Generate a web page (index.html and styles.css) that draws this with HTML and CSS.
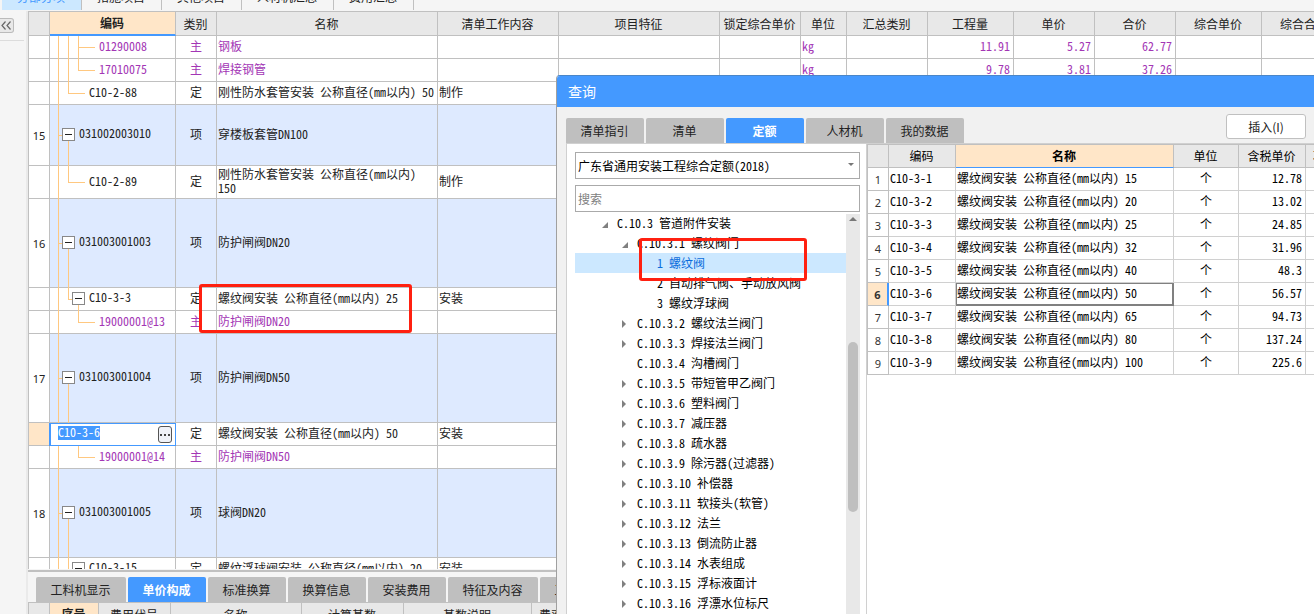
FILE: index.html
```html
<!DOCTYPE html>
<html lang="zh-CN">
<head>
<meta charset="utf-8">
<title>分部分项</title>
<link rel="stylesheet" href="styles.css">
</head>
<body>
<div class="app">
  <nav class="top-tabs">
    <button class="top-tab top-tab-active">分部分项</button>
    <button class="top-tab">措施项目</button>
    <button class="top-tab">其他项目</button>
    <button class="top-tab">人材机汇总</button>
    <button class="top-tab">费用汇总</button>
  </nav>
  <div class="workspace">
    <aside class="sidebar">
      <button class="collapse" aria-label="收起">
        <svg width="11" height="9" viewBox="0 0 11 9"><path d="M4.500 0.500L1 4.500L4.500 8.500M9.500 0.500L6 4.500L9.500 8.500" fill="none" stroke="#666" stroke-width="1.200"/></svg>
      </button>
    </aside>
    <main class="content">
      <div class="grid-area">
        <table class="grid main-grid">
          <colgroup>
            <col class="w-no"><col class="w-code"><col class="w-type"><col class="w-name"><col class="w-work"><col class="w-feature"><col class="w-80"><col class="w-unit"><col class="w-80"><col class="w-85"><col class="w-80"><col class="w-80"><col class="w-85"><col class="w-85">
          </colgroup>
          <thead>
            <tr><th></th><th class="current">编码</th><th>类别</th><th>名称</th><th>清单工作内容</th><th>项目特征</th><th>锁定综合单价</th><th>单位</th><th>汇总类别</th><th>工程量</th><th>单价</th><th>合价</th><th>综合单价</th><th>综合合价</th></tr>
          </thead>
          <tbody>
            <tr class="material"><td class="no"></td><td class="code t-mid3">01290008</td><td class="type">主</td><td>钢板</td><td></td><td></td><td></td><td>kg</td><td></td><td class="num">11.91</td><td class="num">5.27</td><td class="num">62.77</td><td></td><td></td></tr>
            <tr class="material"><td class="no"></td><td class="code t-end3">17010075</td><td class="type">主</td><td>焊接钢管</td><td></td><td></td><td></td><td>kg</td><td></td><td class="num">9.78</td><td class="num">3.81</td><td class="num">37.26</td><td></td><td></td></tr>
            <tr><td class="no"></td><td class="code t-end2">C10-2-88</td><td class="type">定</td><td>刚性防水套管安装 公称直径(mm以内) 50</td><td>制作</td><td></td><td></td><td></td><td></td><td></td><td></td><td></td><td></td><td></td></tr>
            <tr class="item h-60"><td class="no">15</td><td class="code t-item"><button class="fold" aria-label="折叠"></button>031002003010</td><td class="type">项</td><td>穿楼板套管DN100</td><td></td><td></td><td></td><td></td><td></td><td></td><td></td><td></td><td></td><td></td></tr>
            <tr class="h-33"><td class="no"></td><td class="code t-end2">C10-2-89</td><td class="type">定</td><td>刚性防水套管安装 公称直径(mm以内) 150</td><td>制作</td><td></td><td></td><td></td><td></td><td></td><td></td><td></td><td></td><td></td></tr>
            <tr class="item h-89"><td class="no">16</td><td class="code t-item"><button class="fold" aria-label="折叠"></button>031003001003</td><td class="type">项</td><td>防护闸阀DN20</td><td></td><td></td><td></td><td></td><td></td><td></td><td></td><td></td><td></td><td></td></tr>
            <tr><td class="no"></td><td class="code t-sub"><button class="fold" aria-label="折叠"></button>C10-3-3</td><td class="type">定</td><td>螺纹阀安装 公称直径(mm以内) 25</td><td>安装</td><td></td><td></td><td></td><td></td><td></td><td></td><td></td><td></td><td></td></tr>
            <tr class="material"><td class="no"></td><td class="code t-last3">19000001@13</td><td class="type">主</td><td>防护闸阀DN20</td><td></td><td></td><td></td><td></td><td></td><td></td><td></td><td></td><td></td><td></td></tr>
            <tr class="item h-89"><td class="no">17</td><td class="code t-item"><button class="fold" aria-label="折叠"></button>031003001004</td><td class="type">项</td><td>防护闸阀DN50</td><td></td><td></td><td></td><td></td><td></td><td></td><td></td><td></td><td></td><td></td></tr>
            <tr><td class="no no-current"></td><td class="editing"><div class="editor"><input class="code-input" value="C10-3-6" aria-label="编码"><button class="more" aria-label="更多"><i></i><i></i><i></i></button></div></td><td class="type">定</td><td>螺纹阀安装 公称直径(mm以内) 50</td><td>安装</td><td></td><td></td><td></td><td></td><td></td><td></td><td></td><td></td><td></td></tr>
            <tr class="material"><td class="no"></td><td class="code t-last3">19000001@14</td><td class="type">主</td><td>防护闸阀DN50</td><td></td><td></td><td></td><td></td><td></td><td></td><td></td><td></td><td></td><td></td></tr>
            <tr class="item h-89"><td class="no">18</td><td class="code t-item"><button class="fold" aria-label="折叠"></button>031003001005</td><td class="type">项</td><td>球阀DN20</td><td></td><td></td><td></td><td></td><td></td><td></td><td></td><td></td><td></td><td></td></tr>
            <tr><td class="no"></td><td class="code t-sub"><button class="fold" aria-label="折叠"></button>C10-3-15</td><td class="type">定</td><td>螺纹浮球阀安装 公称直径(mm以内) 20</td><td>安装</td><td></td><td></td><td></td><td></td><td></td><td></td><td></td><td></td><td></td></tr>
          </tbody>
        </table>
      </div>
      <section class="detail">
        <div class="tabs detail-tabs">
          <button class="tab tab-wide">工料机显示</button>
          <button class="tab tab-active">单价构成</button>
          <button class="tab">标准换算</button>
          <button class="tab">换算信息</button>
          <button class="tab">安装费用</button>
          <button class="tab tab-wide">特征及内容</button>
          <button class="tab tab-wide">工程量明细</button>
        </div>
        <table class="grid detail-grid">
          <colgroup><col class="w-no"><col class="w-seq"><col class="w-fee"><col class="w-dname"><col class="w-base"><col class="w-desc"><col class="w-rate"></colgroup>
          <thead><tr><th></th><th class="current">序号</th><th>费用代号</th><th>名称</th><th>计算基数</th><th>基数说明</th><th class="cut">费率</th></tr></thead>
        </table>
      </section>
    </main>
  </div>

  <div class="mark mark-grid"></div>

  <section class="dialog" role="dialog" aria-label="查询">
    <h1 class="dialog-title">查询</h1>
    <div class="dialog-bar">
      <div class="tabs">
        <button class="tab">清单指引</button>
        <button class="tab">清单</button>
        <button class="tab tab-active">定额</button>
        <button class="tab">人材机</button>
        <button class="tab">我的数据</button>
      </div>
      <button class="insert">插入(I)</button>
    </div>
    <div class="dialog-body">
      <div class="library">
        <div class="select-box">
          <select class="field" aria-label="定额库"><option>广东省通用安装工程综合定额(2018)</option></select>
        </div>
        <input class="field" type="search" placeholder="搜索" aria-label="搜索">
        <div class="tree-box">
          <ul class="tree">
            <li class="l1 open">C.10.3 管道附件安装</li>
            <li class="l2 open">C.10.3.1 螺纹阀门</li>
            <li class="l3 selected">1 螺纹阀</li>
            <li class="l3">2 自动排气阀、手动放风阀</li>
            <li class="l3">3 螺纹浮球阀</li>
            <li class="l2 closed">C.10.3.2 螺纹法兰阀门</li>
            <li class="l2 closed">C.10.3.3 焊接法兰阀门</li>
            <li class="l2">C.10.3.4 沟槽阀门</li>
            <li class="l2 closed">C.10.3.5 带短管甲乙阀门</li>
            <li class="l2 closed">C.10.3.6 塑料阀门</li>
            <li class="l2 closed">C.10.3.7 减压器</li>
            <li class="l2 closed">C.10.3.8 疏水器</li>
            <li class="l2 closed">C.10.3.9 除污器(过滤器)</li>
            <li class="l2 closed">C.10.3.10 补偿器</li>
            <li class="l2 closed">C.10.3.11 软接头(软管)</li>
            <li class="l2 closed">C.10.3.12 法兰</li>
            <li class="l2 closed">C.10.3.13 倒流防止器</li>
            <li class="l2 closed">C.10.3.14 水表组成</li>
            <li class="l2 closed">C.10.3.15 浮标液面计</li>
            <li class="l2 closed">C.10.3.16 浮漂水位标尺</li>
          </ul>
          <div class="scrollbar"><span class="scroll-up"></span><span class="thumb"></span></div>
          <div class="mark mark-tree"></div>
        </div>
      </div>
      <div class="results">
        <table class="grid result-grid">
          <colgroup><col class="w-no"><col class="w-rcode"><col class="w-rname"><col class="w-runit"><col class="w-rprice"><col class="w-85"></colgroup>
          <thead><tr><th></th><th>编码</th><th class="current">名称</th><th>单位</th><th>含税单价</th><th class="cut">项目特征</th></tr></thead>
          <tbody>
            <tr><td class="no">1</td><td>C10-3-1</td><td>螺纹阀安装 公称直径(mm以内) 15</td><td class="type">个</td><td class="num">12.78</td><td></td></tr>
            <tr><td class="no">2</td><td>C10-3-2</td><td>螺纹阀安装 公称直径(mm以内) 20</td><td class="type">个</td><td class="num">13.02</td><td></td></tr>
            <tr><td class="no">3</td><td>C10-3-3</td><td>螺纹阀安装 公称直径(mm以内) 25</td><td class="type">个</td><td class="num">24.85</td><td></td></tr>
            <tr><td class="no">4</td><td>C10-3-4</td><td>螺纹阀安装 公称直径(mm以内) 32</td><td class="type">个</td><td class="num">31.96</td><td></td></tr>
            <tr><td class="no">5</td><td>C10-3-5</td><td>螺纹阀安装 公称直径(mm以内) 40</td><td class="type">个</td><td class="num">48.3</td><td></td></tr>
            <tr><td class="no no-current">6</td><td>C10-3-6</td><td class="focused">螺纹阀安装 公称直径(mm以内) 50</td><td class="type">个</td><td class="num">56.57</td><td></td></tr>
            <tr><td class="no">7</td><td>C10-3-7</td><td>螺纹阀安装 公称直径(mm以内) 65</td><td class="type">个</td><td class="num">94.73</td><td></td></tr>
            <tr><td class="no">8</td><td>C10-3-8</td><td>螺纹阀安装 公称直径(mm以内) 80</td><td class="type">个</td><td class="num">137.24</td><td></td></tr>
            <tr><td class="no">9</td><td>C10-3-9</td><td>螺纹阀安装 公称直径(mm以内) 100</td><td class="type">个</td><td class="num">225.6</td><td></td></tr>
          </tbody>
        </table>
      </div>
    </div>
  </section>
</div>
</body>
</html>
```
FILE: styles.css
```css
:root {
  --line: #c0c0c0;
  --blue: #4499ff;
  --peach: #ffe6c8;
  --orange: linear-gradient(#ffc880, #ffc880);
  --rule: linear-gradient(#c0c0c0, #c0c0c0) 0 100% / 100% 1px no-repeat;
  --mono: "Noto Sans Mono CJK SC", "Noto Sans CJK SC", monospace;
}

* { box-sizing: border-box; }

body, button, input, select {
  font-family: var(--mono);
  font-size: 12px;
  line-height: 14px;
  color: #222;
}

body { margin: 0; }
button { padding: 0; border: 0; white-space: nowrap; }

.app {
  position: relative;
  display: flex;
  flex-direction: column;
  height: 100vh;
  overflow: hidden;
  background: #f5f5f5;
}

/* top tabs */
.top-tabs {
  display: flex;
  align-items: flex-end;
  flex: none;
  height: 11px;
  padding: 0 0 1px 2px;
  overflow: hidden;
}
.top-tab {
  flex: none;
  height: 24px;
  padding: 0 16px 3px 15px;
  border-right: 1px solid var(--line);
  background: #f5f5f5;
}
.top-tab-active { background: #cce8ff; color: var(--blue); }

/* workspace */
.workspace { display: flex; flex: 1; min-height: 0; }
.sidebar {
  flex: none;
  width: 28px;
  border-right: 2px solid #eaeaea;
}
.sidebar::after {
  content: "";
  display: block;
  width: 24px;
  margin-top: 7px;
  border-top: 1px solid #dcdcdc;
}
.collapse {
  display: flex;
  align-items: center;
  justify-content: center;
  width: 14px;
  height: 15px;
  margin-top: 7px;
  border: 1px solid #bbb;
  border-left: 0;
  border-radius: 0 3px 3px 0;
  background: #e8e8e8;
}
.content {
  display: flex;
  flex-direction: column;
  flex: 1;
  min-width: 0;
}
.grid-area {
  flex: 1;
  min-height: 0;
  overflow: hidden;
  border-top: 1px solid var(--line);
  border-left: 1px solid var(--line);
  background: #fff;
}

/* grids */
.grid {
  table-layout: fixed;
  width: 100%;
  border-spacing: 0;
  background: #fff;
}
.main-grid { min-width: 1319px; }
.grid th {
  height: 24px;
  padding: 0 1px 0 0;
  border-right: 1px solid var(--line);
  border-bottom: 1px solid var(--line);
  background: #e8e8e8;
  font-weight: 400;
  white-space: nowrap;
  overflow: hidden;
}
.grid th.current {
  border-bottom: 2px solid var(--blue);
  background: var(--peach);
  font-weight: 700;
}
.grid th.cut { padding-left: 7px; text-align: left; }
.grid td {
  height: 23px;
  padding: 0 1px 2px;
  border-right: 1px solid var(--line);
  border-bottom: 1px solid var(--line);
}
.grid .no {
  padding: 1px 0 0;
  font-family: "Noto Sans", sans-serif;
  font-size: 11px;
  text-align: center;
}
.grid .no-current { background: var(--peach); font-weight: 700; }
.grid .type { text-align: center; }
.grid .num { padding-right: 3px; text-align: right; }
.grid .h-60 td { height: 61px; }
.grid .h-33 td { height: 33px; }
.grid .h-89 td { height: 89px; }
.item td { background: #deeaff; }
.item .no { background: #fff; }
.material { color: #a336b5; }

.w-no { width: 21px; }
.w-code { width: 126px; }
.w-type { width: 41px; }
.w-name { width: 221px; }
.w-work { width: 121px; }
.w-feature { width: 161px; }
.w-unit { width: 46px; }
.w-80 { width: 81px; }
.w-85 { width: 86px; }
.w-seq { width: 49px; }
.w-fee { width: 72px; }
.w-dname { width: 131px; }
.w-base { width: 102px; }
.w-desc { width: 128px; }
.w-rcode { width: 67px; }
.w-rname { width: 218px; }
.w-runit { width: 65px; }
.w-rprice { width: 67px; }

/* tree connectors inside the code column */
.grid td.code { padding-bottom: 4px; border-bottom: 0; }
.grid td.t-mid3 {
  padding-left: 49px;
  background:
    var(--orange) 8px 0 / 1px 100% no-repeat,
    var(--orange) 18px 0 / 1px 100% no-repeat,
    var(--orange) 28px 0 / 1px 100% no-repeat,
    var(--orange) 28px 50% / 17px 1px no-repeat,
    var(--rule);
}
.grid td.t-end3 {
  padding-left: 49px;
  background:
    var(--orange) 8px 0 / 1px 100% no-repeat,
    var(--orange) 18px 0 / 1px 100% no-repeat,
    var(--orange) 28px 0 / 1px 50% no-repeat,
    var(--orange) 28px 50% / 17px 1px no-repeat,
    var(--rule);
}
.grid td.t-last3 {
  padding-left: 49px;
  background:
    var(--orange) 8px 0 / 1px 100% no-repeat,
    var(--orange) 28px 0 / 1px 50% no-repeat,
    var(--orange) 28px 50% / 17px 1px no-repeat,
    var(--rule);
}
.grid td.t-end2 {
  padding-left: 39px;
  background:
    var(--orange) 8px 0 / 1px 100% no-repeat,
    var(--orange) 18px 0 / 1px 50% no-repeat,
    var(--orange) 18px 50% / 17px 1px no-repeat,
    var(--rule);
}
.grid td.t-item {
  padding-left: 12px;
  background:
    var(--orange) 8px 0 / 1px 100% no-repeat,
    var(--orange) 8px 50% / 4px 1px no-repeat,
    var(--orange) 18px 100% / 1px 50% no-repeat,
    var(--rule),
    #deeaff;
}
.grid td.t-sub {
  padding-left: 22px;
  background:
    var(--orange) 8px 0 / 1px 100% no-repeat,
    var(--orange) 18px 0 / 1px 50% no-repeat,
    var(--orange) 18px 50% / 4px 1px no-repeat,
    var(--orange) 28px 100% / 1px 50% no-repeat,
    var(--rule);
}
.fold {
  width: 13px;
  height: 13px;
  margin-right: 4px;
  border: 1px solid #888;
  background: linear-gradient(#222, #222) 50% 50% / 7px 1px no-repeat, #fff;
  vertical-align: middle;
}

/* code being edited */
.grid td.editing {
  padding: 0 3px 0 7px;
  border: 1px solid var(--blue);
  box-shadow: -1px 0 0 var(--blue);
}
.editor { display: flex; align-items: center; justify-content: space-between; }
.code-input {
  align-self: flex-start;
  width: 42px;
  height: 14px;
  padding: 0 0 2px;
  border: 0;
  background: var(--blue);
  color: #fff;
}
.more {
  display: flex;
  align-items: center;
  justify-content: center;
  gap: 2px;
  width: 14px;
  height: 17px;
  border: 1px solid #555;
  border-radius: 3px;
  background: #f0f2f8;
}
.more i { width: 2px; height: 2px; background: #444; }

/* tabs */
.tabs { display: flex; gap: 2px; }
.tab {
  flex: none;
  width: 78px;
  height: 25px;
  padding-right: 1px;
  border-radius: 2px 2px 0 0;
  background: #bfbfbf;
}
.tab-wide { width: 90px; }
.tab-active { background: var(--blue); color: #fff; font-weight: 700; }

.detail {
  flex: none;
  height: 45px;
  overflow: hidden;
  border-top: 1px solid #f5f5f5;
}
.detail-tabs {
  padding: 5px 0 0 8px;
  border-top: 2px solid var(--line);
}
.detail-grid {
  border-top: 1px solid var(--line);
  border-left: 1px solid var(--line);
}

/* red annotation frames */
.mark {
  position: absolute;
  border: 3px solid #ff2010;
  border-radius: 3px;
}
.mark-grid { left: 199px; top: 284px; width: 213px; height: 49px; }
.mark-tree { left: 64px; top: 25px; width: 168px; height: 43px; }

/* query dialog */
.dialog {
  position: absolute;
  inset: 75px 0 0 556px;
  display: flex;
  flex-direction: column;
  overflow: hidden;
  border-top: 1px solid #4a86c8;
  border-left: 1px solid #a0a0a0;
  border-radius: 4px 0 0 0;
  background: #f1f1f1;
}
.dialog-title {
  flex: none;
  margin: 0;
  padding: 0 11px;
  background: var(--blue);
  color: #fff;
  font-size: 14px;
  font-weight: 400;
  line-height: 31px;
}
.dialog-bar {
  display: flex;
  align-items: flex-end;
  justify-content: space-between;
  flex: none;
  height: 36px;
  padding: 0 8px 0 9px;
}
.insert {
  width: 80px;
  height: 25px;
  margin-bottom: 4px;
  border: 1px solid var(--line);
  border-radius: 3px;
  background: #fff;
  font-family: "Noto Sans CJK SC", sans-serif;
}
.dialog-body {
  display: flex;
  flex: 1;
  min-height: 0;
  margin-left: 9px;
  border-top: 1px solid #d0d0d0;
  border-left: 1px solid #d0d0d0;
  background: #fff;
}
.library {
  display: flex;
  flex-direction: column;
  flex: none;
  width: 300px;
  padding: 8px 6px 0 8px;
  border-right: 1px solid #d0d0d0;
}
.field {
  flex: none;
  appearance: none;
  width: 100%;
  height: 27px;
  padding: 0 2px;
  border: 1px solid #aaa;
  border-radius: 0;
  background: #fff;
  color: #000;
}
.field::placeholder { color: #808080; }
.select-box { position: relative; display: flex; margin-bottom: 6px; }
.select-box::after {
  content: "";
  position: absolute;
  right: 6px;
  top: 11px;
  border: 3px solid transparent;
  border-top: 3px solid #777;
  border-bottom: 0;
}
.tree-box {
  position: relative;
  display: flex;
  flex: 1;
  min-height: 0;
  margin-top: 1px;
}
.tree {
  flex: 1;
  margin: 0;
  padding: 0;
  overflow: hidden;
  list-style: none;
  color: #000;
  white-space: nowrap;
}
.tree li { display: flex; align-items: center; height: 20px; }
.tree li::before { content: ""; flex: none; width: 8px; margin-right: 8px; }
.tree .l1 { padding-left: 26px; }
.tree .l2 { padding-left: 46px; }
.tree .l3 { padding-left: 66px; }
.tree .open::before { height: 10px; background: #808080; clip-path: polygon(7px 4px, 7px 10px, 1px 10px); }
.tree .closed::before { height: 10px; background: #808080; clip-path: polygon(1px 2px, 5px 6px, 1px 10px); }
.tree .selected { background: #cce8ff; color: #0a6cdc; }
.scrollbar {
  display: flex;
  flex-direction: column;
  align-items: center;
  flex: none;
  width: 14px;
  margin-top: 1px;
  background: #e8e8e8;
}
.scroll-up {
  margin-top: 3px;
  border: 4px solid transparent;
  border-top: 0;
  border-bottom: 4px solid #777;
}
.thumb {
  width: 10px;
  height: 170px;
  margin-top: 121px;
  border-radius: 5px;
  background: #bfbfbf;
}
.results { flex: 1; min-width: 0; overflow: hidden; }
.result-grid {
  min-width: 525px;
  border-top: 1px solid var(--line);
  border-left: 1px solid var(--line);
  color: #000;
}
.result-grid td { border-color: #d0d0d0; }
.result-grid th { height: 23px; }
.result-grid th.current { border-bottom-width: 1px; }
.result-grid .no { border-color: var(--line); color: #333; }
.result-grid .no-current { border-right: 2px solid var(--blue); }
.result-grid .focused { box-shadow: inset 1px 1px #808080, inset -1px -1px #808080; border-color: #808080; }
```
